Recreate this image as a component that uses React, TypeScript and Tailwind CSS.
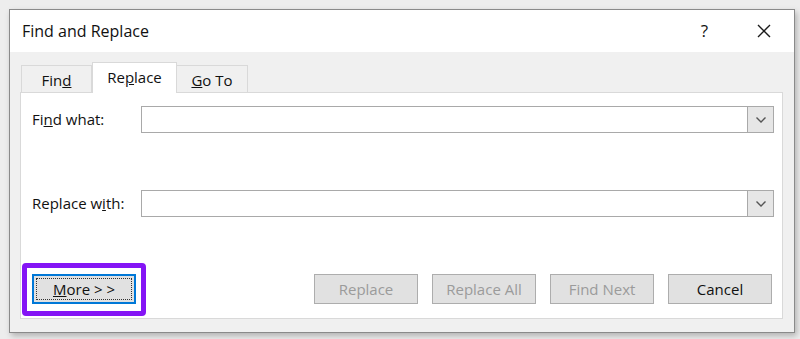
import React from "react";

const font = { fontFamily: '"Open Sans", "Noto Sans", sans-serif' };

function DropInput() {
  return (
    <div className="flex-1 h-[27px] flex bg-white border border-[#a9a9a9]">
      <div className="flex-1" />
      <div className="w-[26px] h-full bg-[#e6e6e6] border-l border-[#a9a9a9] flex items-center justify-center">
        <svg width="12" height="8" viewBox="0 0 12 8">
          <path d="M1.5 1.5 L6 6 L10.5 1.5" fill="none" stroke="#555" strokeWidth="1.4" />
        </svg>
      </div>
    </div>
  );
}

function Btn({ children, disabled }: { children: React.ReactNode; disabled?: boolean }) {
  return (
    <div
      className={
        "w-[104px] h-[30px] bg-[#e1e1e1] border border-[#adadad] flex items-center justify-center text-[15px] " +
        (disabled ? "text-[#9b9b9b]" : "text-[#111]")
      }
    >
      {children}
    </div>
  );
}

export default function App() {
  return (
    <div className="w-[800px] h-[339px] bg-[#ededed] pl-[9px] pt-[9px] overflow-hidden" style={font}>
      <div className="w-[786px] h-[324px] border border-[#8a8a8a] bg-[#f0f0f0] flex flex-col shadow-[2px_3px_6px_rgba(0,0,0,0.25)]">
        {/* title bar */}
        <div className="h-[42px] bg-white flex items-center pl-[12px] pr-[22px] text-[#111]">
          <span className="text-[16px] flex-1">Find and Replace</span>
          <span className="text-[17px] mr-[48px]">?</span>
          <svg width="16" height="16" viewBox="0 0 16 16">
            <path d="M2 2 L14 14 M14 2 L2 14" stroke="#1b1b1b" strokeWidth="1.4" />
          </svg>
        </div>

        {/* body */}
        <div className="flex-1 flex flex-col pt-[10px] pl-[10px] pr-[11px]">
          {/* tabs */}
          <div className="flex items-end h-[30px] pl-[1px] text-[15px] text-[#111] relative z-10">
            <div className="w-[71px] h-[27px] border border-b-0 border-[#d9d9d9] bg-[#f0f0f0] flex items-center justify-center pt-[2px]">
              <span>
                Fin<span className="underline">d</span>
              </span>
            </div>
            <div className="w-[85px] h-[31px] -mb-[1px] border border-b-0 border-[#d9d9d9] bg-white flex items-center justify-center pb-[2px]">
              <span>
                Re<span className="underline">p</span>lace
              </span>
            </div>
            <div className="w-[71px] h-[27px] border border-b-0 border-l-0 border-[#d9d9d9] bg-[#f0f0f0] flex items-center justify-center pt-[2px]">
              <span>
                <span className="underline">G</span>o To
              </span>
            </div>
          </div>

          {/* panel */}
          <div className="w-[763px] h-[227px] bg-white border border-[#d9d9d9] flex flex-col pt-[13px] pl-[11px] pr-[8px] text-[15px] text-[#111]">
            <div className="flex items-center h-[27px]">
              <span className="w-[109px]">
                Fi<span className="underline">n</span>d what:
              </span>
              <DropInput />
            </div>
            <div className="flex items-center h-[27px] mt-[57px]">
              <span className="w-[109px]">
                Replace w<span className="underline">i</span>th:
              </span>
              <DropInput />
            </div>
            <div className="flex items-center h-[30px] mt-[57px]">
              <div className="relative">
                <div className="w-[104px] h-[30px] bg-[#e1e1e1] border-2 border-[#0078d7] p-[2px]">
                  <div className="w-full h-full border border-dotted border-[#333] flex items-center justify-center">
                    <span>
                      <span className="underline">M</span>ore &gt; &gt;
                    </span>
                  </div>
                </div>
                <span className="absolute left-[-10px] right-[-10px] top-[-11px] bottom-[-12px] border-[5px] border-[#8414f5] rounded-[4px]" />
              </div>
              <div className="flex-1" />
              <div className="flex gap-[14px] mr-[2px]">
                <Btn disabled>Replace</Btn>
                <Btn disabled>Replace All</Btn>
                <Btn disabled>Find Next</Btn>
                <Btn>Cancel</Btn>
              </div>
            </div>
          </div>
        </div>
      </div>
    </div>
  );
}
